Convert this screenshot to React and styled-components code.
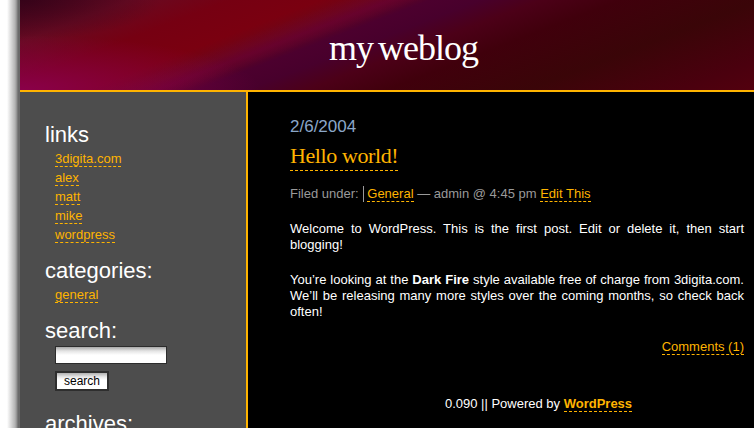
import React from 'react';
import styled, { createGlobalStyle } from 'styled-components';

const ORANGE = '#ffb400';

const GlobalStyle = createGlobalStyle`
  html, body {
    margin: 0;
    padding: 0;
    overflow: hidden;
  }
  body {
    background: linear-gradient(to right, #fff 0, #fff 7px, #b4b4b4 15px, #8c8c8c 17px, #6a6a6a 18px, #6a6a6a 20px, #fff 20px) repeat-y;
    font-family: Tahoma, "Liberation Sans", Arial, sans-serif;
  }
`;

const Page = styled.div`
  margin-left: 20px;
  width: 767px;
`;

const Header = styled.header`
  box-sizing: content-box;
  height: 62px;
  padding-top: 28px;
  border-bottom: 2px solid ${ORANGE};
  background:
    radial-gradient(ellipse 240px 55px at 0% 100%, rgba(140, 0, 80, 0.9), transparent),
    radial-gradient(ellipse 140px 40px at 0% 0%, rgba(40, 0, 20, 0.6), transparent),
    linear-gradient(159deg, transparent 32%, rgba(110, 0, 60, 0.45) 37%, transparent 40%),
    linear-gradient(159deg,
      #4a0620 0%, #680a22 11%, #760012 21%, #7a0010 30%, #6c0618 35%,
      #4c002e 41%, #48002c 46%, #4c0018 52%, #40000c 60%, #3a0508 74%, #4a000e 89%, #56000f 100%);
`;

const Title = styled.h1`
  margin: 0;
  text-align: center;
  font-family: Georgia, "Liberation Serif", "DejaVu Serif", serif;
  font-weight: normal;
  font-size: 36px;
  line-height: 1.15;
  letter-spacing: -1px;
  word-spacing: -3px;
  color: #fff;
`;

const Columns = styled.div`
  display: flex;
  min-height: calc(100vh - 92px);
`;

const Sidebar = styled.aside`
  width: 201px;
  flex-shrink: 0;
  padding: 30px 0 0 25px;
  background: #4d4d4d;
  border-right: 2px solid ${ORANGE};
`;

const Section = styled.div`
  margin-bottom: 14px;
`;

const SideHeading = styled.h2`
  margin: 0 0 1px;
  font-size: 22px;
  line-height: 26px;
  font-weight: normal;
  color: #fff;
`;

const LinkList = styled.ul`
  list-style: none;
  margin: 0;
  padding: 0 0 0 10px;
  font-size: 13px;
  line-height: 19px;
`;

const Link = styled.a`
  color: ${ORANGE};
  text-decoration: none;
  border-bottom: 1px dashed ${ORANGE};
  font-weight: ${(p) => (p.$bold ? 'bold' : 'normal')};
  padding-bottom: ${(p) => p.$pad || 0}px;
`;

const SearchForm = styled.form`
  display: flex;
  flex-direction: column;
  align-items: flex-start;
  gap: 7px;
  padding: 1px 0 0 10px;
  margin-bottom: 20px;
`;

const SearchInput = styled.input`
  width: 112px;
  height: 18px;
  box-sizing: border-box;
  border: 1px solid #2c2c2c;
  background: linear-gradient(to bottom, #a8a8a8 0, #e4e4e4 4px, #fff 8px, #fff 100%);
  padding: 0;
  margin: 0;
`;

const SearchButton = styled.button`
  width: 54px;
  height: 20px;
  box-sizing: border-box;
  border: 2px solid #2e2e2e;
  background: linear-gradient(to bottom, #b0b0b0 0, #e8e8e8 4px, #fff 7px, #fff 100%);
  font-family: Tahoma, "Liberation Sans", Arial, sans-serif;
  font-size: 12px;
  color: #000;
  padding: 0;
  margin: 0;
`;

const Content = styled.main`
  flex: 1;
  background: #000;
  padding: 25px 0 0 42px;
`;

const Post = styled.article`
  padding-right: 43px;
`;

const PostDate = styled.div`
  font-size: 17px;
  line-height: 20px;
  color: #8ba7c9;
  margin-bottom: 6px;
`;

const PostTitle = styled.h2`
  margin: 0 0 17px;
  font-family: Georgia, "Liberation Serif", "DejaVu Serif", serif;
  font-weight: normal;
  font-size: 22px;
  line-height: 26px;
  letter-spacing: -0.4px;
`;

const Meta = styled.div`
  font-size: 13px;
  line-height: 16px;
  color: #9a9a9a;
  margin-bottom: 19px;
`;

const Categories = styled.span`
  display: inline-block;
  border-left: 1px solid #9a9a9a;
  padding-left: 3px;
  margin-left: 1px;
  line-height: 16px;
`;

const Paragraph = styled.p`
  margin: 0 0 19px;
  font-size: 13px;
  line-height: 16px;
  color: #fff;
  text-align: justify;
`;

const Feedback = styled.div`
  text-align: right;
  font-size: 13px;
  line-height: 16px;
`;

const Footer = styled.footer`
  margin-top: 41px;
  text-align: center;
  font-size: 13px;
  line-height: 16px;
  color: #fff;
`;

const links = ['3digita.com', 'alex', 'matt', 'mike', 'wordpress'];

export default function App() {
  return (
    <>
      <GlobalStyle />
      <Page>
        <Header>
          <Title>my weblog</Title>
        </Header>
        <Columns>
          <Sidebar>
            <Section>
              <SideHeading>links</SideHeading>
              <LinkList>
                {links.map((l) => (
                  <li key={l}><Link href="#">{l}</Link></li>
                ))}
              </LinkList>
            </Section>
            <Section>
              <SideHeading>categories:</SideHeading>
              <LinkList>
                <li><Link href="#">general</Link></li>
              </LinkList>
            </Section>
            <SideHeading>search:</SideHeading>
            <SearchForm onSubmit={(e) => e.preventDefault()}>
              <SearchInput type="text" />
              <SearchButton type="submit">search</SearchButton>
            </SearchForm>
            <Section>
              <SideHeading>archives:</SideHeading>
              <LinkList>
                <li><Link href="#">February 2004</Link></li>
              </LinkList>
            </Section>
          </Sidebar>
          <Content>
            <Post>
              <PostDate>2/6/2004</PostDate>
              <PostTitle><Link href="#" $pad={2}>Hello world!</Link></PostTitle>
              <Meta>
                Filed under:{' '}
                <Categories><Link href="#">General</Link></Categories>
                {' '}— admin @ 4:45 pm <Link href="#">Edit This</Link>
              </Meta>
              <Paragraph>
                Welcome to WordPress. This is the first post. Edit or delete it, then start blogging!
              </Paragraph>
              <Paragraph>
                You’re looking at the <strong>Dark Fire</strong> style available free of charge from 3digita.com. We’ll be releasing many more styles over the coming months, so check back often!
              </Paragraph>
              <Feedback><Link href="#">Comments (1)</Link></Feedback>
            </Post>
            <Footer>
              0.090 || Powered by <Link href="#" $bold>WordPress</Link>
            </Footer>
          </Content>
        </Columns>
      </Page>
    </>
  );
}
